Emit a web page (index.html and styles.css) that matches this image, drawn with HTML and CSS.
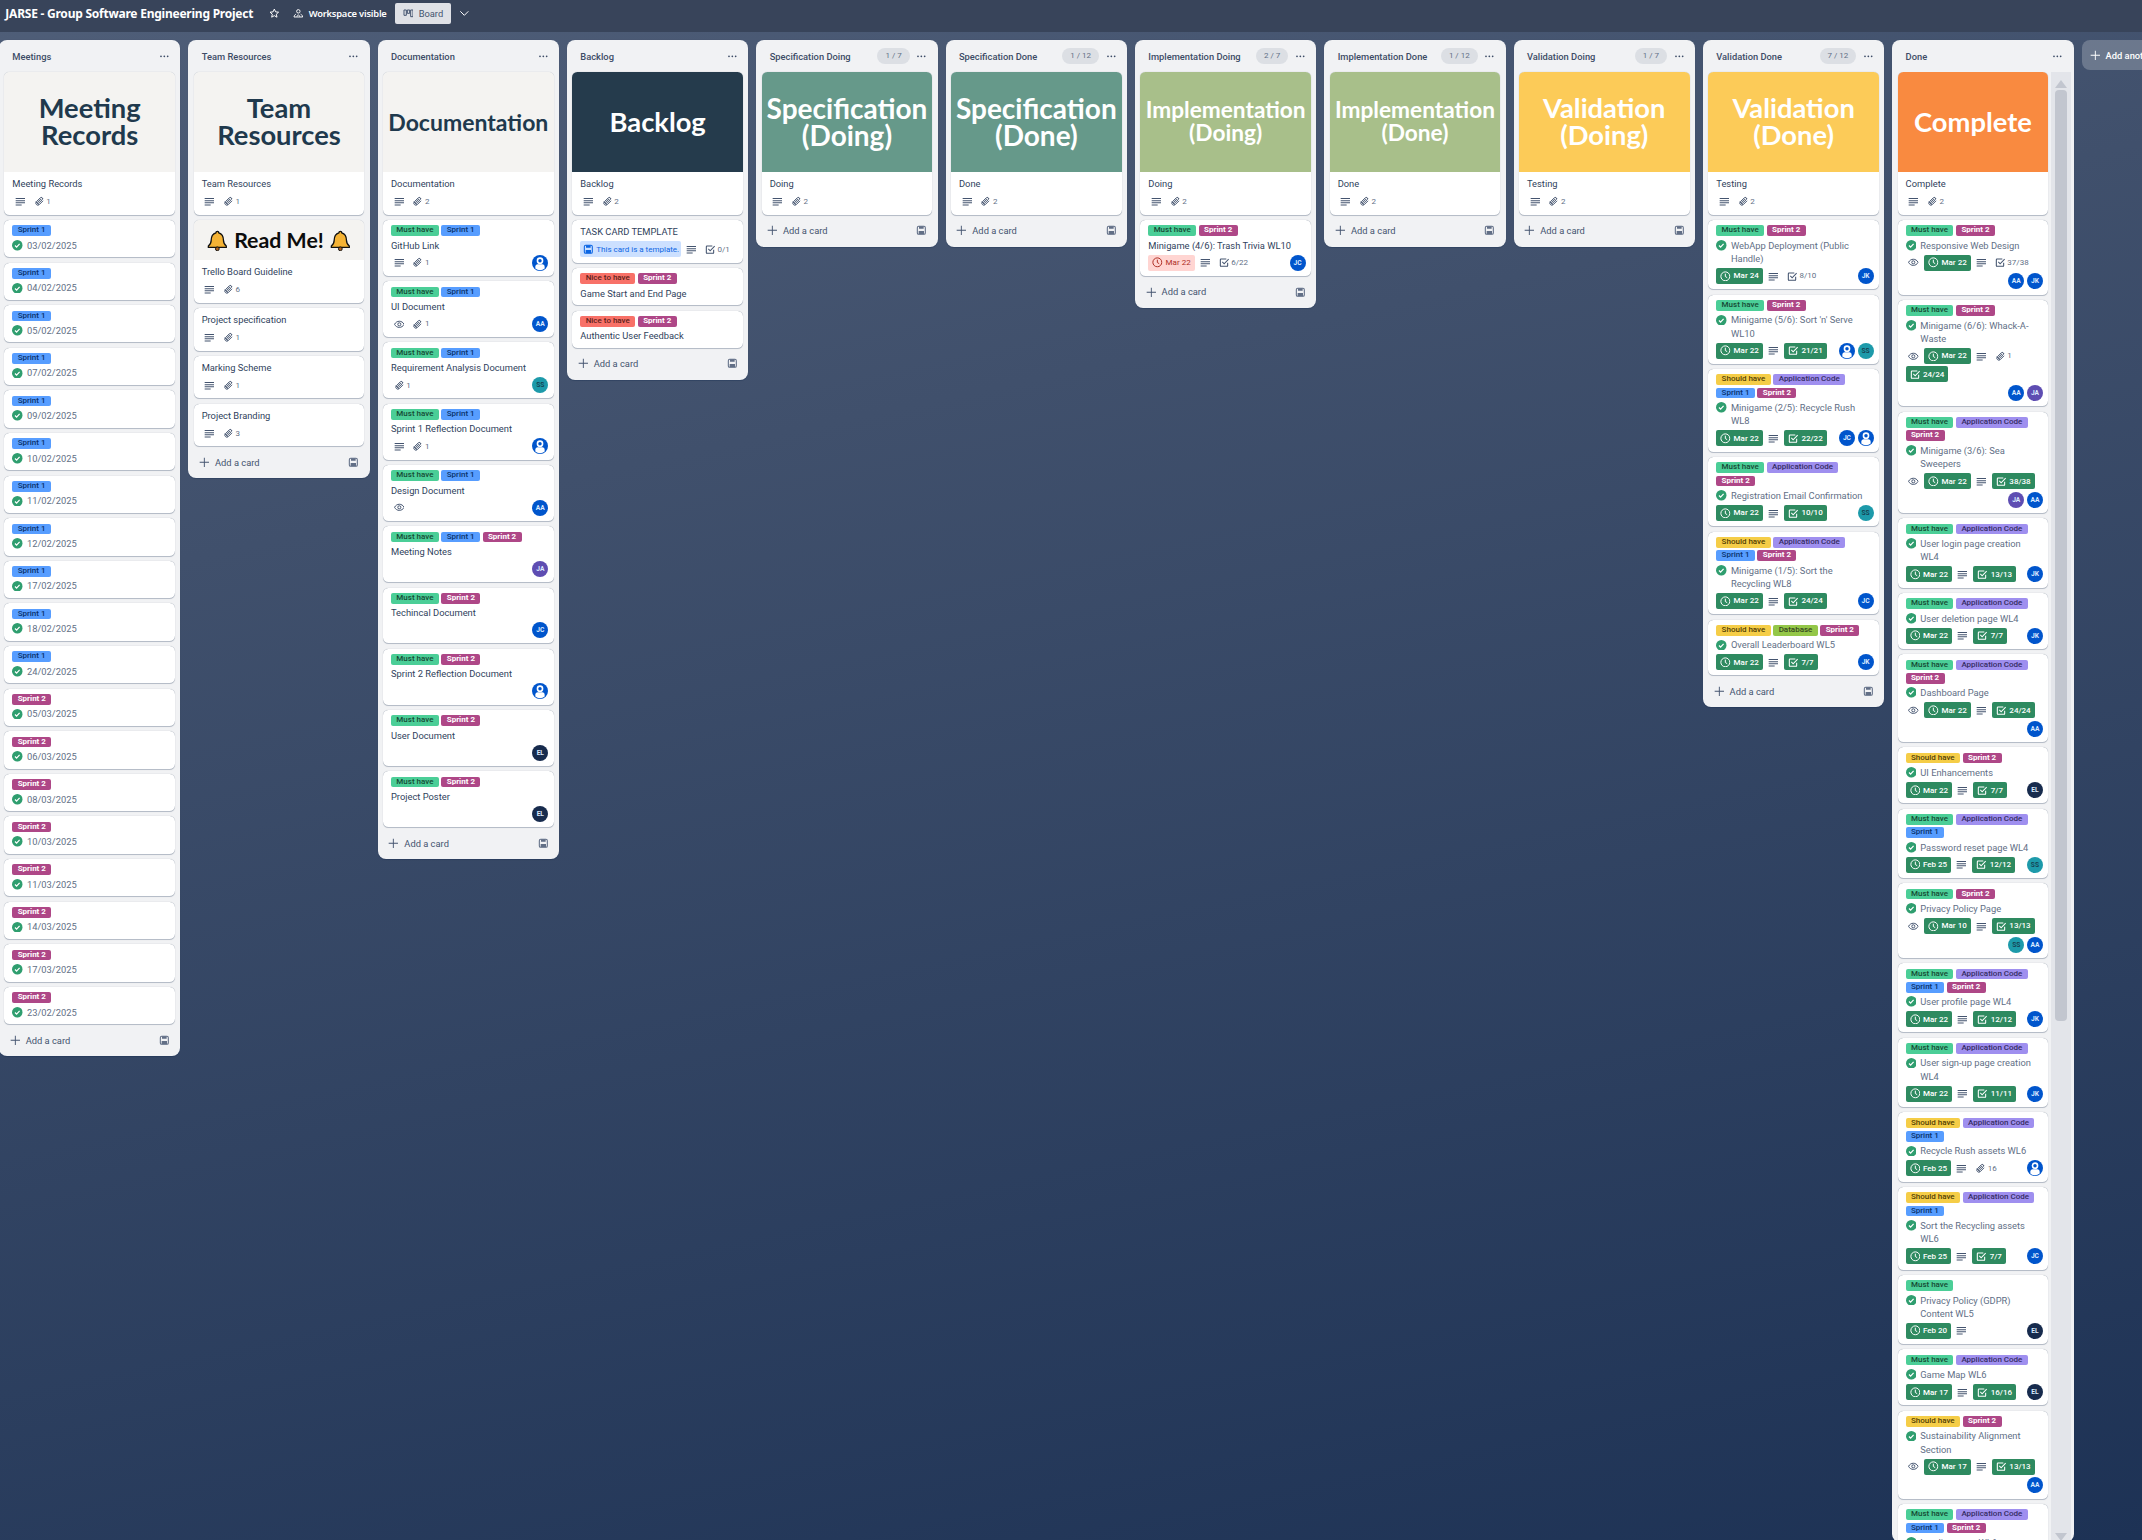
FILE: index.html
```html
<!DOCTYPE html>
<html lang="en">
<head>
<meta charset="UTF-8" />
<title>JARSE - Group Software Engineering Project</title>
<link rel="stylesheet" href="styles.css">
</head>
<body>
  <svg class="sprite" aria-hidden="true">
    <symbol id="i-desc" viewBox="0 0 16 16"><path d="M1 3h14v1.6H1zM1 6.2h14v1.6H1zM1 9.4h14V11H1zM1 12.6h9v1.6H1z" fill="currentColor"/></symbol>
    <symbol id="i-clip" viewBox="0 0 16 16"><path d="M13.6 7.2 8 12.8a3 3 0 0 1-4.4-4.2l5.8-5.8a2 2 0 0 1 2.9 2.8L6.6 11a1 1 0 0 1-1.4-1.4L10.4 4.400M11.800 2.500l1.500 1.500M2.800 8.500l4.700 4.700" fill="none" stroke="currentColor" stroke-width="1.500"/></symbol>
    <symbol id="i-eye" viewBox="0 0 16 16"><path d="M.8 8C2.400 5 5 3.400 8 3.400S13.600 5 15.200 8C13.600 11 11 12.600 8 12.600S2.400 11 .8 8Z" fill="none" stroke="currentColor" stroke-width="1.500"/><circle cx="8" cy="8" r="2.300" fill="none" stroke="currentColor" stroke-width="1.500"/></symbol>
    <symbol id="i-clock" viewBox="0 0 16 16"><circle cx="8" cy="8" r="6.700" fill="none" stroke="currentColor" stroke-width="1.500"/><path d="M8 4v4.300l2.800 1.700" fill="none" stroke="currentColor" stroke-width="1.500"/></symbol>
    <symbol id="i-check" viewBox="0 0 16 16"><path d="M13 8.500V13a1 1 0 0 1-1 1H3a1 1 0 0 1-1-1V4a1 1 0 0 1 1-1h8" fill="none" stroke="currentColor" stroke-width="1.600"/><path d="m5 7.500 2.700 2.700L14.500 3.200" fill="none" stroke="currentColor" stroke-width="1.600"/></symbol>
    <symbol id="i-done" viewBox="0 0 16 16"><circle cx="8" cy="8" r="8" fill="#2f9e6f"/><path d="m4.500 8.300 2.400 2.400 4.500-5" fill="none" stroke="#fff" stroke-width="1.800"/></symbol>
    <symbol id="i-plus" viewBox="0 0 16 16"><path d="M7.300 1h1.400v6.300H15v1.400H8.700V15H7.300V8.700H1V7.300h6.300z" fill="currentColor"/></symbol>
    <symbol id="i-tpl" viewBox="0 0 16 16"><rect x="2" y="2" width="12" height="12" rx="2" fill="none" stroke="currentColor" stroke-width="1.600"/><path d="M4.500 2v3.500h7V2M4 9h8v5H4z" fill="currentColor"/></symbol>
    <symbol id="i-dots" viewBox="0 0 16 16"><circle cx="3" cy="8" r="1.300" fill="currentColor"/><circle cx="8" cy="8" r="1.300" fill="currentColor"/><circle cx="13" cy="8" r="1.300" fill="currentColor"/></symbol>
    <symbol id="i-star" viewBox="0 0 16 16"><path d="m8 1.600 1.900 4.200 4.500.5-3.400 3 1 4.500L8 11.500l-4 2.300 1-4.500-3.400-3 4.500-.5z" fill="none" stroke="currentColor" stroke-width="1.500" stroke-linejoin="round"/></symbol>
    <symbol id="i-people" viewBox="0 0 16 16"><circle cx="8" cy="5" r="2.600" fill="none" stroke="currentColor" stroke-width="1.400"/><path d="M1.500 13.500c.3-2.300 1.500-3.700 3-4.200M14.500 13.500c-.3-2.300-1.500-3.700-3-4.200M1.500 13.500h13M6 13c0-1.300.7-2.500 2-2.500s2 1.200 2 2.500" fill="none" stroke="currentColor" stroke-width="1.400"/></symbol>
    <symbol id="i-board" viewBox="0 0 16 16"><path d="M1.500 3h3.500v8H1.500zM6.500 3H10v5H6.500zM11.500 3H15v10h-3.500z" fill="none" stroke="currentColor" stroke-width="1.500"/></symbol>
    <symbol id="i-down" viewBox="0 0 16 16"><path d="m2 5 6 6 6-6" fill="none" stroke="currentColor" stroke-width="1.500"/></symbol>
    <symbol id="i-person" viewBox="0 0 24 24"><circle cx="12" cy="12" r="12" fill="#0055cc"/><circle cx="12" cy="8.500" r="5" fill="#fff"/><circle cx="12" cy="8.500" r="2.600" fill="#0055cc"/><path d="M5 17.500c0-2 1.500-3.500 3.500-3.500h7c2 0 3.500 1.500 3.500 3.500v2.800a10.500 10.500 0 0 1-14 0z" fill="#fff"/></symbol>
    <symbol id="i-bell" viewBox="0 0 24 24"><path d="M12 2.500c-1 0-1.500.7-1.500 1.500C7 5 5.500 8 5.500 12c0 3-1 4.500-3 6v1.500h19V18c-2-1.500-3-3-3-6 0-4-1.500-7-5-8 0-.8-.5-1.500-1.500-1.500Z" fill="#f5b335" stroke="#111" stroke-width="1.400"/><circle cx="12" cy="21" r="2" fill="#b5651d" stroke="#111"/></symbol>
  </svg>

  <div class="app">
    <header class="topbar">
      <span class="board-name">JARSE - Group Software Engineering Project</span>
      <svg class="icon star"><use href="#i-star"/></svg>
      <span class="visibility"><svg class="icon"><use href="#i-people"/></svg>Workspace visible</span>
      <span class="view-btn"><svg class="icon"><use href="#i-board"/></svg>Board</span>
      <svg class="icon chevron"><use href="#i-down"/></svg>
    </header>
    <main class="board" id="board"></main>
  </div>

  <script src="board.js"></script>
</body>
</html>
```

FILE: styles.css
```css
* {
  box-sizing: border-box;
}
html, body {
  margin: 0;
  height: 100%;
  overflow: hidden;
}
body {
  font-family: Roboto, "Noto Sans", sans-serif;
  background: #33455f;
}
.sprite {
  display: none;
}
.icon {
  width: 16px;
  height: 16px;
  flex: none;
}

/* the page was captured at 67% browser zoom, sizes below are the 100% ones */
.app {
  zoom: 0.6667;
  width: 3213px;
  height: 2310px;
  overflow: hidden;
  background: linear-gradient(168deg, #4f5e78 0%, #40506c 30%, #1d3255 100%);
}

.topbar {
  height: 48px;
  display: flex;
  align-items: center;
  padding: 0 0 8px 8px;
  background: #38445a;
  color: #fff;
}
.board-name {
  font-family: "Noto Sans", Roboto, sans-serif;
  font-size: 18px;
  font-weight: 700;
  letter-spacing: -0.35px;
  width: 395px;
  white-space: nowrap;
}
.visibility {
  display: flex;
  align-items: center;
  gap: 8px;
  margin-left: 20px;
  font-family: "Noto Sans", Roboto, sans-serif;
  font-size: 14px;
  font-weight: 600;
  letter-spacing: -0.3px;
  width: 143px;
  white-space: nowrap;
}
.view-btn {
  display: flex;
  align-items: center;
  gap: 8px;
  margin-left: 10px;
  width: 84px;
  height: 32px;
  padding-left: 12px;
  border-radius: 3px;
  background: #dfe1e6;
  color: #44546f;
  font-size: 14px;
}
.chevron {
  margin-left: 12px;
}

.board {
  display: flex;
  align-items: flex-start;
  gap: 12px;
  padding: 12px 0 0 0;
  margin-left: -1.5px;
  width: 3400px;
}

.list {
  width: 272px;
  flex: none;
  background: #f1f2f4;
  border-radius: 12px;
  color: #44546f;
  box-shadow: 0 1px 1px rgba(9, 30, 66, 0.25);
}
.list-head {
  height: 48px;
  display: flex;
  align-items: center;
  padding: 0 16px 0 20px;
  font-size: 14px;
  font-weight: 500;
  color: #3d4c66;
}
.list-title {
  flex: 1;
  white-space: nowrap;
}
.count {
  height: 24px;
  padding: 0 12px;
  margin-right: 10px;
  border-radius: 12px;
  background: #dcdfe4;
  color: #626f86;
  font-size: 12px;
  font-weight: 400;
  line-height: 24px;
  white-space: nowrap;
}
.cards {
  display: flex;
  flex-direction: column;
  gap: 8px;
  padding: 0 8px;
}
.list-foot {
  height: 48px;
  display: flex;
  align-items: center;
  gap: 8px;
  padding: 0 16px;
  font-size: 14px;
  color: #44546f;
}
.list-foot span {
  flex: 1;
}
.list-foot .tpl {
  color: #626f86;
}

/* last list scrolls */
.list-body {
  display: flex;
  height: 2205px;
  overflow: hidden;
}
.list-body .cards {
  width: 234px;
  padding: 0 0 0 8px;
  flex: none;
}
.track {
  width: 30px;
  margin-left: 4px;
  flex: none;
  display: flex;
  flex-direction: column;
  align-items: center;
  background: #e3e5ea;
}
.arrow {
  width: 0;
  height: 0;
  margin-top: 12px;
  border: 9px solid transparent;
  border-top: 0;
  border-bottom: 12px solid #c2c6cf;
}
.arrow.bottom {
  margin: auto 0 2px;
  border-top: 12px solid #c2c6cf;
  border-bottom: 0;
}
.thumb {
  width: 18px;
  height: 1396px;
  margin-top: 3px;
  border-radius: 6px;
  background: #c2c6cf;
}

.card {
  background: #fff;
  border-radius: 8px;
  box-shadow: 0 1px 1px rgba(9, 30, 66, 0.25), 0 0 1px rgba(9, 30, 66, 0.31);
  overflow: hidden;
  flex: none;
}
.cover {
  height: 150px;
  padding: 0 4px;
  display: flex;
  align-items: center;
  justify-content: center;
  text-align: center;
  font-family: Lato, "Noto Sans", sans-serif;
  font-weight: 700;
  font-size: 41px;
  line-height: 40px;
  background: #f4f3f1;
  color: #20394d;
}
.cover.small {
  font-size: 34px;
  line-height: 34px;
}
.cover.doc {
  font-size: 34.5px;
}
.cover.dark { background: #253b4c; color: #fff; }
.cover.spec { background: #66998a; color: #fff; font-size: 42px; }
.cover.impl { background: #a8bf8a; color: #fff; }
.cover.valid { background: #fccb58; color: #fff; }
.cover.done { background: #f98a40; color: #fff; }
.cover.notice {
  height: 60px;
  gap: 8px;
  color: #0c0c0c;
  font-size: 32px;
}
.cover.notice svg {
  width: 34px;
  height: 34px;
}
.card-body {
  padding: 8px 12px 4px;
}
.labels {
  display: flex;
  flex-wrap: wrap;
  gap: 4px;
  margin-bottom: 4px;
}
.label {
  height: 16px;
  padding: 0 8px;
  border-radius: 3px;
  font-size: 12px;
  font-weight: 500;
  line-height: 16px;
  white-space: nowrap;
}
.l-must { background: #4bce97; color: #164b35; }
.l-nice { background: #f87168; color: #5d1f1a; }
.l-should { background: #f5cd47; color: #533f04; }
.l-app { background: #9f8fef; color: #352c63; }
.l-db { background: #94c748; color: #37471f; }
.l-s1 { background: #579dff; color: #09326c; }
.l-s2 { background: #ae4787; color: #fff; font-weight: 700; }

.title {
  display: flex;
  gap: 6px;
  margin-bottom: 4px;
  font-size: 14px;
  line-height: 20px;
  color: #2f3f5c;
}
.title .icon {
  margin-top: 2px;
}
.title.is-done {
  color: #626f86;
}
.foot {
  display: flex;
  flex-wrap: wrap;
  color: #44546f;
}
.badges {
  display: flex;
  flex-wrap: wrap;
}
.badges.is-template {
  flex-wrap: nowrap;
}
.badge {
  display: flex;
  align-items: center;
  gap: 3px;
  height: 24px;
  padding: 0 4px;
  margin: 0 4px 4px 0;
  border-radius: 3px;
  font-size: 12px;
  color: #626f86;
  white-space: nowrap;
}
.badge .icon {
  color: #44546f;
}
.badge.ok {
  padding: 0 6px;
  gap: 4px;
  background: #2e8a60;
  color: #fff;
  font-weight: 500;
}
.badge.ok .icon {
  color: #fff;
}
.badge.late {
  padding: 0 6px;
  gap: 4px;
  background: #ffd5d2;
  color: #ae2e24;
}
.badge.late .icon {
  color: #ae2e24;
}
.tpl-note {
  display: flex;
  align-items: center;
  gap: 4px;
  width: 151px;
  flex: none;
  height: 24px;
  padding: 0 4px;
  margin: 0 4px 4px 0;
  border-radius: 3px;
  background: #cce0ff;
  color: #0c66e4;
  font-size: 12px;
  white-space: nowrap;
}
.members {
  display: flex;
  gap: 4px;
  margin: 0 -4px 4px auto;
}
.avatar {
  width: 24px;
  height: 24px;
  border-radius: 50%;
  font-size: 10px;
  font-weight: 700;
  line-height: 24px;
  text-align: center;
  color: #dcebff;
}
.avatar svg {
  display: block;
  width: 24px;
  height: 24px;
}
.a-blue { background: #0055cc; }
.a-teal { background: #1d9aaa; color: #164555; }
.a-purple { background: #5e4db2; }
.a-navy { background: #172b4d; }

.add-list {
  width: 272px;
  height: 45px;
  flex: none;
  display: flex;
  align-items: center;
  gap: 8px;
  padding-left: 12px;
  border-radius: 12px;
  background: rgba(255, 255, 255, 0.22);
  color: #fff;
  font-size: 14px;
  font-weight: 500;
}
```

FILE: board.js
```js
// Board content, cards are written as short objects to keep the list readable
const LABELS = {
  M: ['Must have', 'l-must'], N: ['Nice to have', 'l-nice'], S: ['Should have', 'l-should'],
  A: ['Application Code', 'l-app'], D: ['Database', 'l-db'],
  1: ['Sprint 1', 'l-s1'], 2: ['Sprint 2', 'l-s2']
};
const MEMBERS = { AA: 'a-blue', JK: 'a-blue', JC: 'a-blue', SS: 'a-teal', JA: 'a-purple', EL: 'a-navy' };

const icon = name => `<svg class="icon"><use href="#i-${name}"/></svg>`;

function dated(label, date) {
  return { l: label, t: date, done: true };
}
function coverCard(text, cls, title, att) {
  return { cover: text, coverCls: cls, t: title, desc: true, att };
}
// Shorthand for a finished task: labels, title, due, checklist, members, extras
function task(l, t, due, chk, m, extra) {
  return Object.assign({ l, t, due, chk, m, done: true, desc: true }, extra);
}

const lists = [
  { title: 'Meetings', cards: [
    coverCard('Meeting<br>Records', '', 'Meeting Records', 1),
    ...['03/02/2025', '04/02/2025', '05/02/2025', '07/02/2025', '09/02/2025', '10/02/2025', '11/02/2025',
        '12/02/2025', '17/02/2025', '18/02/2025', '24/02/2025'].map(d => dated('1', d)),
    ...['05/03/2025', '06/03/2025', '08/03/2025', '10/03/2025', '11/03/2025', '14/03/2025', '17/03/2025',
        '23/02/2025'].map(d => dated('2', d))
  ] },
  { title: 'Team Resources', cards: [
    coverCard('Team<br>Resources', '', 'Team Resources', 1),
    { notice: true, t: 'Trello Board Guideline', desc: true, att: 6 },
    { t: 'Project specification', desc: true, att: 1 },
    { t: 'Marking Scheme', desc: true, att: 1 },
    { t: 'Project Branding', desc: true, att: 3 }
  ] },
  { title: 'Documentation', cards: [
    coverCard('Documentation', 'doc', 'Documentation', 2),
    { l: 'M1', t: 'GitHub Link', desc: true, att: 1, m: ['P'] },
    { l: 'M1', t: 'UI Document', eye: true, att: 1, m: ['AA'] },
    { l: 'M1', t: 'Requirement Analysis Document', att: 1, m: ['SS'] },
    { l: 'M1', t: 'Sprint 1 Reflection Document', desc: true, att: 1, m: ['P'] },
    { l: 'M1', t: 'Design Document', eye: true, m: ['AA'] },
    { l: 'M12', t: 'Meeting Notes', m: ['JA'] },
    { l: 'M2', t: 'Techincal Document', m: ['JC'] },
    { l: 'M2', t: 'Sprint 2 Reflection Document', m: ['P'] },
    { l: 'M2', t: 'User Document', m: ['EL'] },
    { l: 'M2', t: 'Project Poster', m: ['EL'] }
  ] },
  { title: 'Backlog', cards: [
    coverCard('Backlog', 'dark', 'Backlog', 2),
    { t: 'TASK CARD TEMPLATE', template: true, desc: true, chkPlain: '0/1' },
    { l: 'N2', t: 'Game Start and End Page' },
    { l: 'N2', t: 'Authentic User Feedback' }
  ] },
  { title: 'Specification Doing', count: '1 / 7', cards: [coverCard('Specification<br>(Doing)', 'spec', 'Doing', 2)] },
  { title: 'Specification Done', count: '1 / 12', cards: [coverCard('Specification<br>(Done)', 'spec', 'Done', 2)] },
  { title: 'Implementation Doing', count: '2 / 7', cards: [
    coverCard('Implementation<br>(Doing)', 'impl small', 'Doing', 2),
    { l: 'M2', t: 'Minigame (4/6): Trash Trivia WL10', late: 'Mar 22', desc: true, chkPlain: '6/22', m: ['JC'] }
  ] },
  { title: 'Implementation Done', count: '1 / 12', cards: [coverCard('Implementation<br>(Done)', 'impl small', 'Done', 2)] },
  { title: 'Validation Doing', count: '1 / 7', cards: [coverCard('Validation<br>(Doing)', 'valid', 'Testing', 2)] },
  { title: 'Validation Done', count: '7 / 12', cards: [
    coverCard('Validation<br>(Done)', 'valid', 'Testing', 2),
    task('M2', 'WebApp Deployment (Public Handle)', 'Mar 24', null, ['JK'], { chkPlain: '8/10' }),
    task('M2', "Minigame (5/6): Sort 'n' Serve WL10", 'Mar 22', '21/21', ['P', 'SS']),
    task('SA12', 'Minigame (2/5): Recycle Rush WL8', 'Mar 22', '22/22', ['JC', 'P']),
    task('MA2', 'Registration Email Confirmation', 'Mar 22', '10/10', ['SS']),
    task('SA12', 'Minigame (1/5): Sort the Recycling WL8', 'Mar 22', '24/24', ['JC']),
    task('SD2', 'Overall Leaderboard WL5', 'Mar 22', '7/7', ['JK'])
  ] },
  { title: 'Done', scroll: true, cards: [
    coverCard('Complete', 'done', 'Complete', 2),
    task('M2', 'Responsive Web Design', 'Mar 22', null, ['AA', 'JK'], { eye: true, chkPlain: '37/38' }),
    task('M2', 'Minigame (6/6): Whack-A-Waste', 'Mar 22', '24/24', ['AA', 'JA'], { eye: true, att: 1 }),
    task('MA2', 'Minigame (3/6): Sea Sweepers', 'Mar 22', '38/38', ['JA', 'AA'], { eye: true }),
    task('MA', 'User login page creation WL4', 'Mar 22', '13/13', ['JK']),
    task('MA', 'User deletion page WL4', 'Mar 22', '7/7', ['JK']),
    task('MA2', 'Dashboard Page', 'Mar 22', '24/24', ['AA'], { eye: true }),
    task('S2', 'UI Enhancements', 'Mar 22', '7/7', ['EL']),
    task('MA1', 'Password reset page WL4', 'Feb 25', '12/12', ['SS']),
    task('M2', 'Privacy Policy Page', 'Mar 10', '13/13', ['SS', 'AA'], { eye: true }),
    task('MA12', 'User profile page WL4', 'Mar 22', '12/12', ['JK']),
    task('MA', 'User sign-up page creation WL4', 'Mar 22', '11/11', ['JK']),
    task('SA1', 'Recycle Rush assets WL6', 'Feb 25', null, ['P'], { att: 16 }),
    task('SA1', 'Sort the Recycling assets WL6', 'Feb 25', '7/7', ['JC']),
    task('M', 'Privacy Policy (GDPR) Content WL5', 'Feb 20', null, ['EL']),
    task('MA', 'Game Map WL6', 'Mar 17', '16/16', ['EL']),
    task('S2', 'Sustainability Alignment Section', 'Mar 17', '13/13', ['AA'], { eye: true }),
    task('MA12', 'Landing page WL6', 'Mar 17', '9/9', ['AA'])
  ] }
];

function renderFoot(c) {
  let html = '';
  if (c.template) html += `<span class="tpl-note">${icon('tpl')}This card is a template.</span>`;
  if (c.eye) html += `<span class="badge">${icon('eye')}</span>`;
  if (c.late) html += `<span class="badge late">${icon('clock')}${c.late}</span>`;
  if (c.due) html += `<span class="badge ok">${icon('clock')}${c.due}</span>`;
  if (c.desc) html += `<span class="badge">${icon('desc')}</span>`;
  if (c.att) html += `<span class="badge">${icon('clip')}${c.att}</span>`;
  if (c.chk) html += `<span class="badge ok">${icon('check')}${c.chk}</span>`;
  if (c.chkPlain) html += `<span class="badge">${icon('check')}${c.chkPlain}</span>`;
  let members = '';
  if (c.m) {
    const avatars = c.m.map(m => m === 'P'
      ? '<span class="avatar"><svg><use href="#i-person"/></svg></span>'
      : `<span class="avatar ${MEMBERS[m]}">${m}</span>`);
    members = `<span class="members">${avatars.join('')}</span>`;
  }
  if (!html && !members) return '';
  const cls = c.template ? 'badges is-template' : 'badges';
  return `<div class="foot"><div class="${cls}">${html}</div>${members}</div>`;
}

function renderCard(c) {
  let top = '';
  if (c.cover) top = `<div class="cover ${c.coverCls}">${c.cover}</div>`;
  if (c.notice) {
    const bell = '<svg><use href="#i-bell"/></svg>';
    top = `<div class="cover notice">${bell}<span>Read Me!</span>${bell}</div>`;
  }
  const labels = c.l
    ? `<div class="labels">${[...c.l].map(k => `<span class="label ${LABELS[k][1]}">${LABELS[k][0]}</span>`).join('')}</div>`
    : '';
  const title = c.done
    ? `<div class="title is-done">${icon('done')}<span>${c.t}</span></div>`
    : `<div class="title"><span>${c.t}</span></div>`;
  return `<article class="card">${top}<div class="card-body">${labels}${title}${renderFoot(c)}</div></article>`;
}

function renderList(list) {
  const count = list.count ? `<span class="count">${list.count}</span>` : '';
  const head = `<div class="list-head"><span class="list-title">${list.title}</span>${count}${icon('dots')}</div>`;
  const cards = `<div class="cards">${list.cards.map(renderCard).join('')}</div>`;
  if (list.scroll) {
    const track = '<div class="track"><i class="arrow"></i><i class="thumb"></i><i class="arrow bottom"></i></div>';
    return `<section class="list">${head}<div class="list-body">${cards}${track}</div></section>`;
  }
  const foot = `<div class="list-foot">${icon('plus')}<span>Add a card</span><svg class="icon tpl"><use href="#i-tpl"/></svg></div>`;
  return `<section class="list">${head}${cards}${foot}</section>`;
}

document.getElementById('board').innerHTML = lists.map(renderList).join('')
  + `<div class="add-list">${icon('plus')}Add another list</div>`;
```
